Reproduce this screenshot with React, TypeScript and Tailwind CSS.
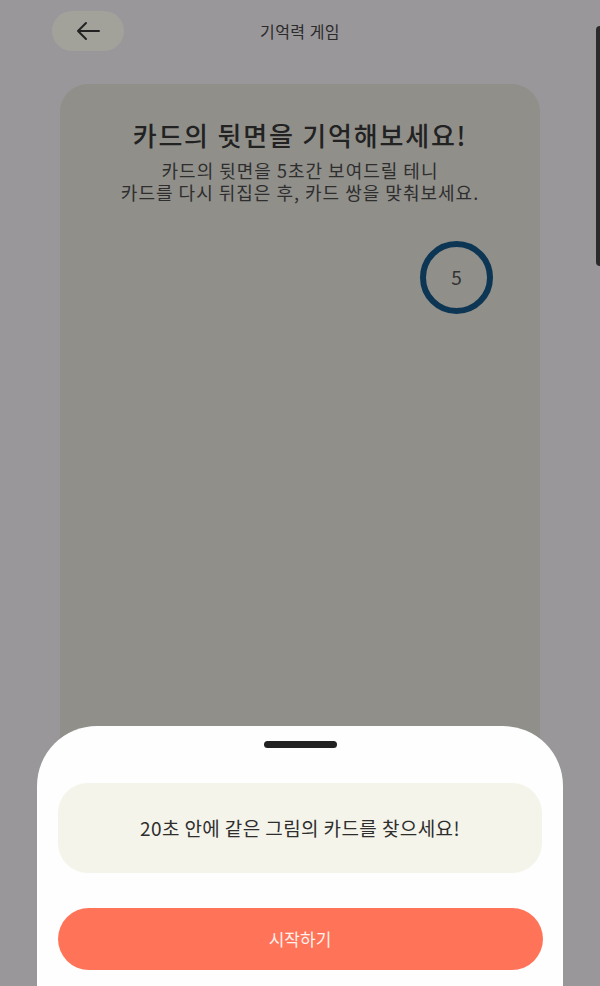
import React from "react";

export default function App() {
  return (
    <div
      className="relative w-[600px] h-[986px] overflow-hidden bg-[#99979a]"
      style={{ fontFamily: '"Noto Sans CJK KR", "Noto Sans", sans-serif' }}
    >
      {/* header */}
      <div className="flex items-center h-[62px] relative">
        <div className="ml-[52px] w-[72px] h-[40px] rounded-[20px] bg-[#a2a29b] flex items-center justify-center">
          <svg width="26" height="22" viewBox="0 0 26 22" fill="none">
            <path d="M24 11H3M11 3L3 11L11 19" stroke="#222" strokeWidth="2" strokeLinecap="round" strokeLinejoin="round" />
          </svg>
        </div>
        <div className="absolute left-0 right-0 top-[18px] text-center text-[16px] leading-[26px] tracking-[0.5px] text-[#2a2a2a]">기억력 게임</div>
      </div>

      {/* scrollbar */}
      <div className="absolute right-0 top-[26px] w-[4px] h-[240px] rounded-l-full bg-[#2a2a2a]" />

      {/* card */}
      <div className="mx-[60px] mt-[22px] h-[720px] rounded-[28px] bg-[#908f8a] flex flex-col items-center pt-[34px]">
        <div className="text-[26px] leading-[34px] tracking-[1.8px] font-medium text-[#222]">카드의 뒷면을 기억해보세요!</div>
        <div className="mt-[7px] text-[18px] leading-[22px] tracking-[1px] text-[#2e2e2e] text-center">
          카드의 뒷면을 5초간 보여드릴 테니
          <br />
          카드를 다시 뒤집은 후, 카드 쌍을 맞춰보세요.
        </div>
        <div className="self-end mr-[47px] mt-[38px] w-[73px] h-[73px] rounded-full border-[6px] border-[#0c3654] flex items-center justify-center text-[19px] text-[#333]">
          5
        </div>
      </div>

      {/* bottom sheet */}
      <div className="absolute left-[37px] right-[37px] top-[726px] bottom-0 bg-[#fefefe] rounded-t-[60px] flex flex-col items-center">
        <div className="mt-[15px] w-[73px] h-[7px] rounded-full bg-[#222]" />
        <div className="mt-[35px] w-[484px] h-[90px] rounded-[30px] bg-[#f4f4ea] flex items-center justify-center text-[19px] tracking-[0.4px] text-[#2e2e2e]">
          20초 안에 같은 그림의 카드를 찾으세요!
        </div>
        <div className="mt-[35px] w-[485px] h-[62px] rounded-full bg-[#ff7459] flex items-center justify-center text-[17px] text-[#fff1ec]">
          시작하기
        </div>
      </div>
    </div>
  );
}
